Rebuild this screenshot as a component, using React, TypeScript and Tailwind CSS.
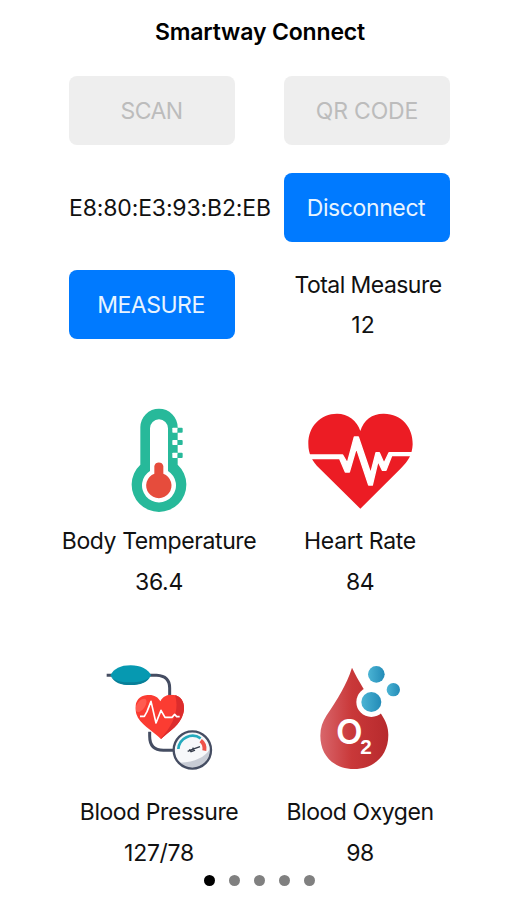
import type {ReactNode} from 'react';

interface MetricProps {
	icon: ReactNode;
	label: string;
	value: string;
	labelClass: string;
	valueClass?: string;
}

function ThermometerIcon() {
	return (
			<svg viewBox="0 0 360 360" className="ml-0.5 h-[120px] w-[120px]">
				<g fill="#27b99a">
					<path d="M121 194V82a56 56 0 0 1 112 0v112a82 82 0 1 1-112 0Z"/>
					<rect x="232" y="83" width="16" height="15" rx="3"/>
					<rect x="232" y="120" width="16" height="15" rx="3"/>
					<rect x="232" y="158" width="16" height="16" rx="3"/>
				</g>
				<path d="M150 213V85a27 27 0 0 1 54 0v128a51 51 0 1 1-54 0Z" fill="#fff"/>
				<g fill="#fff">
					<rect x="217" y="83" width="15" height="15" rx="2"/>
					<rect x="217" y="120" width="15" height="15" rx="2"/>
					<rect x="217" y="158" width="15" height="16" rx="2"/>
				</g>
				<path d="M163 221v-23a14 14 0 0 1 27 0v23a38 38 0 1 1-27 0Z" fill="#e64c3c"/>
			</svg>
	);
}

function HeartRateIcon() {
	return (
			<svg viewBox="0 0 360 360" className="h-[120px] w-[120px]">
				<path
						d="M181 93C191 59 218 40 252 41C305 42 339 82 338 133C337 163 324 184 303 205L181 326L58 205C37 184 25 162 25 132C24 80 62 41 111 41C144 41 171 61 181 93Z"
						fill="#ec1c24"
				/>
				<path
						d="M20 165H128L142 189L163 111H175L212 220L228 158H238L252 190L267 158H345V167H275L258 211H247L234 184L217 255H206L169 144L148 216H136L119 176H20Z"
						fill="#fff"
						stroke="#fff"
						strokeWidth="4"
						strokeLinejoin="round"
				/>
			</svg>
	);
}

function BloodPressureIcon() {
	return (
			<svg viewBox="0 0 360 360" className="ml-0.5 h-[120px] w-[120px]">
				<defs>
					<clipPath id="pressure-heart">
						<path d="M181 139C190 121 207 118 222 120C247 124 257 148 250 175C240 211 213 225 183 252C155 225 119 208 109 177C101 148 111 122 142 120C160 118 174 125 181 139Z"/>
					</clipPath>
					<clipPath id="gauge-face">
						<circle cx="277" cy="285" r="52"/>
					</clipPath>
				</defs>
				<path d="M20 61H40M148 61H170Q209 63 209 99V125M149 230V244Q149 286 190 286H224" fill="none" stroke="#454d62" strokeWidth="9"/>
				<path d="M31 61C42 41 61 31 92 31C122 31 145 43 153 61C143 80 122 90 92 90C61 90 43 81 31 61Z" fill="#0699b1"/>
				<path d="M33 65C46 78 64 82 92 82C121 82 141 75 151 65C141 82 122 90 92 90C62 90 44 83 33 65Z" fill="#087f98"/>
				<g clipPath="url(#pressure-heart)">
					<rect x="100" y="110" width="160" height="150" fill="#fb3c32"/>
					<path d="M222 110Q249 180 180 253H260V110Z" fill="#dc2c2c"/>
					<ellipse cx="123" cy="151" rx="12" ry="23" fill="#ff5b50" transform="rotate(35 123 151)"/>
				</g>
				<path d="M120 184H133L141 170L153 139L168 204L183 166L195 187H216L224 178L230 185H239" fill="none" stroke="#fff" strokeWidth="5" strokeLinejoin="round"/>
				<circle cx="277" cy="285" r="56" fill="#f7f8fa"/>
				<g clipPath="url(#gauge-face)">
					<path d="M335 270Q318 319 240 323L270 345H340Z" fill="#c8ccd5"/>
				</g>
				<circle cx="277" cy="285" r="56" fill="none" stroke="#454d62" strokeWidth="7"/>
				<path d="M235 282A43 43 0 0 1 302 250" fill="none" stroke="#24aabd" strokeWidth="8"/>
				<path d="M302 257Q316 267 313 287" fill="none" stroke="#ef5148" strokeWidth="12"/>
				<path d="M263 289L277 283L300 275M278 278L283 286L273 290L268 283" fill="none" stroke="#343b49" strokeWidth="4"/>
			</svg>
	);
}

function BloodOxygenIcon() {
	return (
			<svg viewBox="0 0 300 360" className="h-[120px] w-[100px]">
				<defs>
					<linearGradient id="blood-drop" x1="35" y1="240" x2="235" y2="240" gradientUnits="userSpaceOnUse">
						<stop offset="0" stopColor="#d86469"/>
						<stop offset=".45" stopColor="#c93839"/>
						<stop offset="1" stopColor="#b72a2d"/>
					</linearGradient>
					<linearGradient id="oxygen-bubble">
						<stop offset="0" stopColor="#4bb4d4"/>
						<stop offset="1" stopColor="#238bb7"/>
					</linearGradient>
				</defs>
				<path d="M126 38C146 80 165 107 187 144L214 178C228 200 235 217 235 240C235 300 194 342 132 342C70 342 31 300 31 242C31 219 38 199 50 181C84 130 109 91 126 38Z" fill="url(#blood-drop)"/>
				<circle cx="184" cy="141" r="45" fill="#fff"/>
				<circle cx="184" cy="141" r="30" fill="url(#oxygen-bubble)"/>
				<circle cx="199" cy="58" r="25" fill="url(#oxygen-bubble)"/>
				<circle cx="250" cy="104" r="20" fill="url(#oxygen-bubble)"/>
				<text x="78" y="267" fill="#fff" fontFamily="Inter, sans-serif" fontSize="104" fontWeight="600" letterSpacing="-6">
					O<tspan x="151" y="296" fontFamily="Liberation Sans, sans-serif" fontSize="62" fontWeight="700" letterSpacing="0">2</tspan>
				</text>
			</svg>
	);
}

function Metric({icon, label, value, labelClass, valueClass = ''}: MetricProps) {
	return (
			<div className="flex flex-col items-center">
				{icon}
				<p className={`whitespace-nowrap leading-8 ${labelClass}`}>{label}</p>
				<p className={`mt-[9px] leading-8 ${valueClass}`}>{value}</p>
			</div>
	);
}

export default function App() {
	const buttonClass = 'flex h-[69px] w-[166px] items-center justify-center rounded-lg pt-0.5';

	return (
			<main className="flex h-[900px] w-[507px] flex-col overflow-hidden bg-white font-['Inter',sans-serif] text-[23px] text-[#111]">
				<h1 className="ml-[13px] mt-4 text-center text-[23px] font-semibold leading-8 tracking-[-0.15px] text-black">Smartway Connect</h1>

				<section className="ml-[69px] mt-7 grid grid-cols-[166px_166px] gap-x-[49px] gap-y-7">
					<button className={`${buttonClass} bg-[#eee] pr-px tracking-[-0.6px] text-[#bcbcbc]`} disabled>SCAN</button>
					<button className={`${buttonClass} bg-[#eee] tracking-[-0.2px] text-[#bcbcbc]`} disabled>QR CODE</button>
					<p className="flex items-center whitespace-nowrap pt-0.5 tracking-[-0.15px]">E8:80:E3:93:B2:EB</p>
					<button className={`${buttonClass} bg-[#007aff] pr-0.5 tracking-[-0.4px] text-[#e8f4ff]`}>Disconnect</button>
					<button className={`${buttonClass} bg-[#007aff] pr-0.5 tracking-[-0.5px] text-[#e8f4ff]`}>MEASURE</button>
					<div className="flex flex-col items-center">
						<p className="ml-[2px] -mt-px whitespace-nowrap leading-8 tracking-[-0.55px]">Total Measure</p>
						<p className="mt-2 mr-2 leading-8">12</p>
					</div>
				</section>

				<section className="ml-[59px] mt-[59px] grid grid-cols-[200px_202px]">
					<Metric icon={<ThermometerIcon/>} label="Body Temperature" value="36.4" labelClass="mt-[5px] tracking-[-0.4px]" valueClass="tracking-[-0.3px]"/>
					<Metric icon={<HeartRateIcon/>} label="Heart Rate" value="84" labelClass="mt-[5px] tracking-[-0.3px]" valueClass="tracking-[-0.5px]"/>
				</section>
				<section className="ml-[59px] mt-[57px] grid grid-cols-[200px_202px]">
					<Metric icon={<BloodPressureIcon/>} label="Blood Pressure" value="127/78" labelClass="mt-[21px] tracking-[-0.45px]" valueClass="tracking-[-0.3px]"/>
					<Metric icon={<BloodOxygenIcon/>} label="Blood Oxygen" value="98" labelClass="mt-[21px] tracking-[-0.45px]" valueClass="tracking-[-0.5px]"/>
				</section>

				<nav className="ml-[204px] mt-[6px] flex gap-[14px]">
					<span className="h-[11px] w-[11px] rounded-full bg-black"/>
					<span className="h-[11px] w-[11px] rounded-full bg-[#808080]"/>
					<span className="h-[11px] w-[11px] rounded-full bg-[#808080]"/>
					<span className="h-[11px] w-[11px] rounded-full bg-[#808080]"/>
					<span className="h-[11px] w-[11px] rounded-full bg-[#808080]"/>
				</nav>
			</main>
	);
}
